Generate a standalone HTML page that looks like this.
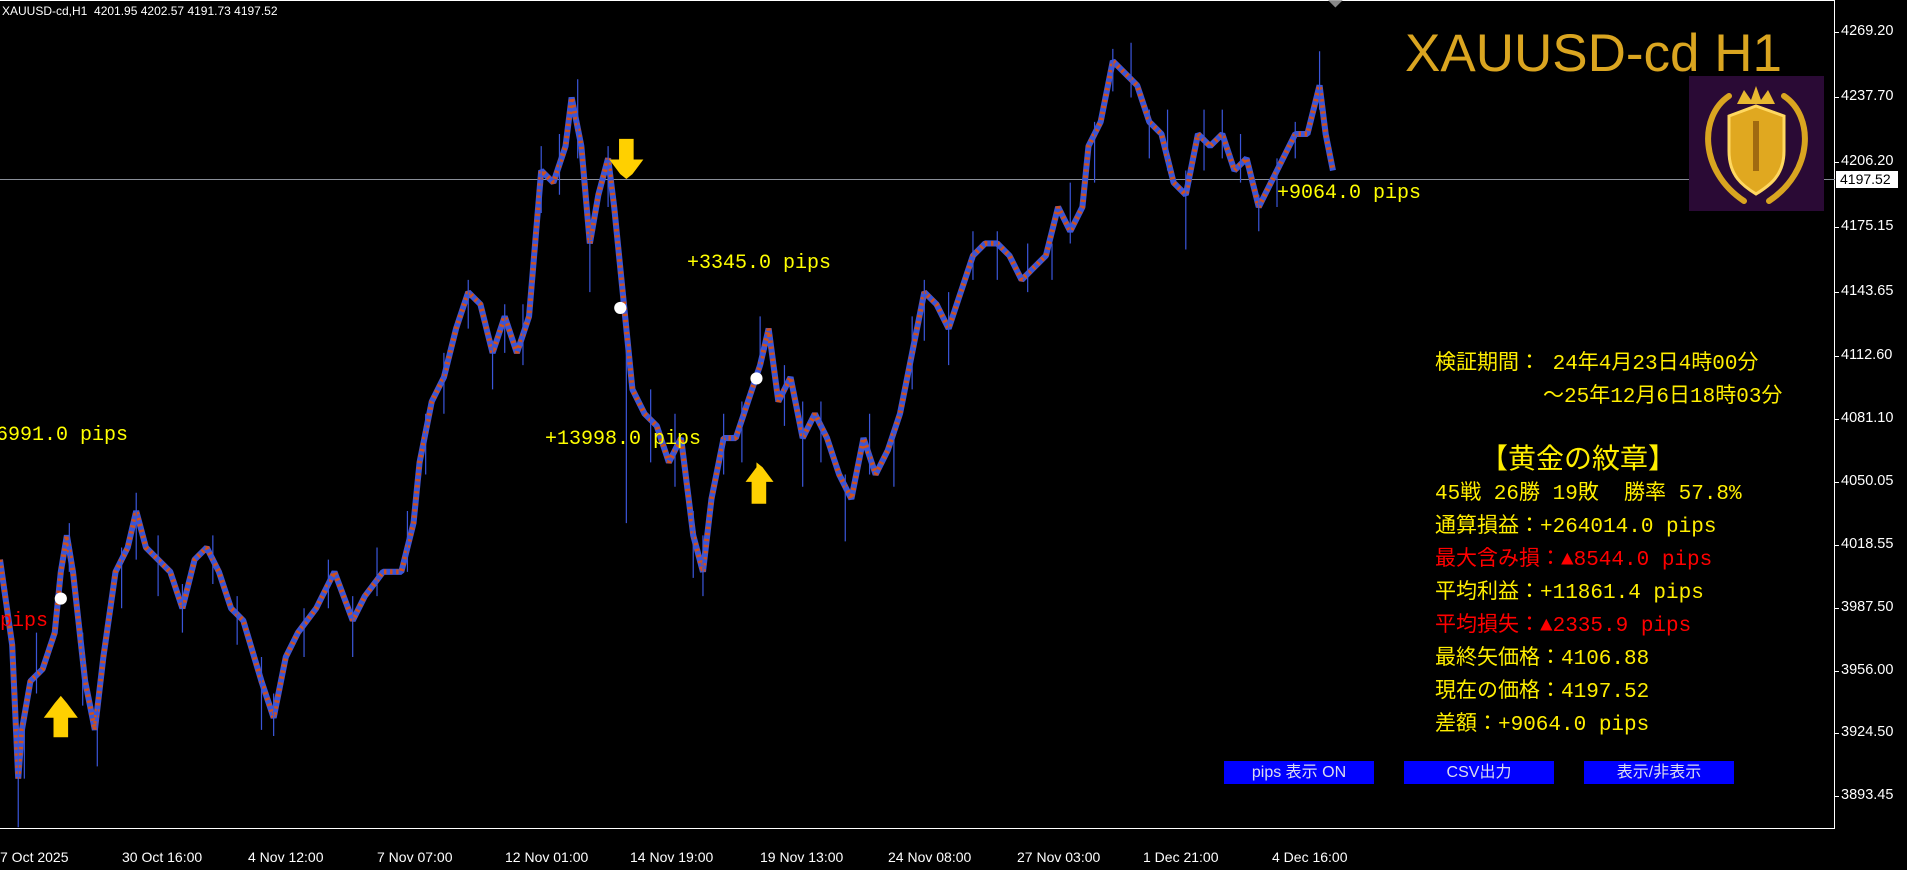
<!DOCTYPE html>
<html><head><meta charset="utf-8">
<style>
body{margin:0;width:1907px;height:870px;background:#000;overflow:hidden;position:relative;font-family:"Liberation Sans","Noto Sans CJK JP",sans-serif}
.a{position:absolute;white-space:nowrap}
.ax{position:absolute;left:1841px;color:#fff;font-size:14.5px;font-family:"Liberation Sans",sans-serif}
.ax:before{content:"";position:absolute;left:-6px;top:9px;width:4px;height:1px;background:#fff}
.dt{position:absolute;top:849px;color:#fff;font-size:14px}
.pp{position:absolute;color:#ffff00;font-size:20px;font-family:"Liberation Mono","Noto Sans CJK JP",monospace}
.inf{position:absolute;left:1435px;color:#ffee00;font-size:21px;font-family:"Liberation Mono","Noto Sans CJK JP",monospace;line-height:26px}
.r{color:#ff0000}
.btn{position:absolute;top:761px;width:150px;height:23px;background:#0000ff;color:#dde;font-size:16px;text-align:center;line-height:23px}
</style></head><body>
<div class="a" style="left:0;top:0;width:1835px;height:829px;border-right:1px solid #fff;border-bottom:1px solid #fff;border-top:1px solid #fff;box-sizing:border-box"></div>
<div class="a" style="left:0;top:179px;width:1835px;height:1px;background:#8a8f99"></div>
<svg class="a" style="left:0;top:0" width="1907" height="870" viewBox="0 0 1568 715">
<polygon points="1092,0 1104,0 1098,6" fill="#888"/>
<g fill="none" stroke-width="5" stroke-linejoin="bevel">
<polyline stroke="#3a55d8" points="0,460 10,530 15,640 18,600 25,560 35,550 45,520 50,470 55,440 60,470 70,560 78,600 85,540 95,470 105,450 112,420 120,450 130,460 140,470 150,500 160,460 170,450 180,470 190,500 200,510 215,560 225,590 235,540 245,520 260,500 275,470 290,510 300,490 315,470 330,470 340,430 345,380 355,330 365,310 375,270 385,240 395,250 405,290 415,260 425,290 435,260 445,140 455,150 465,120 470,80 478,120 485,200 492,160 500,130 505,170 512,240 520,320 530,340 540,350 550,380 560,360 570,440 578,470 585,410 595,360 605,360 615,330 625,300 632,270 640,330 650,310 660,360 670,340 680,360 690,390 700,410 710,360 720,390 730,370 740,340 750,290 760,240 770,250 780,270 790,240 800,210 810,200 820,200 830,210 840,230 850,220 860,210 870,170 880,190 890,170 895,120 905,100 915,50 925,60 935,70 945,100 955,110 965,150 975,160 985,110 995,120 1005,110 1015,140 1025,130 1035,170 1045,150 1055,130 1065,110 1075,110 1085,70 1090,110 1096,140"/>
<polyline stroke="#d0501a" stroke-dasharray="2 3" stroke-width="4" points="0,460 10,530 15,640 18,600 25,560 35,550 45,520 50,470 55,440 60,470 70,560 78,600 85,540 95,470 105,450 112,420 120,450 130,460 140,470 150,500 160,460 170,450 180,470 190,500 200,510 215,560 225,590 235,540 245,520 260,500 275,470 290,510 300,490 315,470 330,470 340,430 345,380 355,330 365,310 375,270 385,240 395,250 405,290 415,260 425,290 435,260 445,140 455,150 465,120 470,80 478,120 485,200 492,160 500,130 505,170 512,240 520,320 530,340 540,350 550,380 560,360 570,440 578,470 585,410 595,360 605,360 615,330 625,300 632,270 640,330 650,310 660,360 670,340 680,360 690,390 700,410 710,360 720,390 730,370 740,340 750,290 760,240 770,250 780,270 790,240 800,210 810,200 820,200 830,210 840,230 850,220 860,210 870,170 880,190 890,170 895,120 905,100 915,50 925,60 935,70 945,100 955,110 965,150 975,160 985,110 995,120 1005,110 1015,140 1025,130 1035,170 1045,150 1055,130 1065,110 1075,110 1085,70 1090,110 1096,140"/>
</g>
<g stroke="#3a55d8" stroke-width="1">
<path d="M15,600V680M20,590V640M30,520V570M57,430V470M68,520V580M80,580V630M100,450V500M112,405V460M130,440V490M150,480V520M175,440V480M195,490V530M215,540V600M225,570V605M250,500V540M270,460V500M290,490V540M310,450V490M335,420V470M350,340V390M365,290V340M385,230V270M405,280V320M415,250V290M430,250V300M445,120V175M460,110V160M475,65V130M485,190V240M500,120V170M515,280V430M535,320V380M555,340V400M570,420V475M578,440V490M595,340V390M610,330V380M625,260V300M645,300V350M660,330V400M675,330V380M695,390V445M715,340V390M735,350V400M750,260V320M760,230V280M780,240V300M800,190V230M820,190V230M845,200V240M865,200V230M880,150V200M900,100V150M915,40V75M930,35V80M945,90V130M960,90V140M975,140V205M990,90V140M1005,90V130M1020,110V150M1035,160V190M1050,130V170M1065,100V130M1085,42V90"/>
</g>
<path d="M45,578L36,590H44V606H56V590H64L55,578L50,572Z" fill="#ffd000"/>
<path d="M510,143L501,131H509V114H521V131H529L520,143L515,147Z" fill="#ffd000"/>
<path d="M622,384L613,396H618V414H630V396H636L627,384L622,380Z" fill="#ffd000"/>
<circle cx="50" cy="492" r="5" fill="#fff"/><circle cx="510" cy="253" r="5" fill="#fff"/><circle cx="622" cy="311" r="5" fill="#fff"/>
</svg>
<div class="a" style="left:2px;top:4px;color:#fff;font-size:12px">XAUUSD-cd,H1&nbsp; 4201.95 4202.57 4191.73 4197.52</div>
<div class="pp" style="left:687px;top:252px">+3345.0 pips</div>
<div class="pp" style="left:-4px;top:424px">6991.0 pips</div>
<div class="pp" style="left:545px;top:428px">+13998.0 pips</div>
<div class="pp" style="left:1277px;top:182px">+9064.0 pips</div>
<div class="pp" style="left:0;top:610px;color:#ff0000">pips</div>
<div class="a" style="left:1405px;top:24px;color:#daa520;font-size:53px;line-height:60px">XAUUSD-cd H1</div>
<div class="a" style="left:1689px;top:76px;width:135px;height:135px;background:#2a0a35">
<svg width="135" height="135" viewBox="0 0 135 135">
<g fill="none" stroke="#d9a520" stroke-width="6" stroke-linecap="round">
<path d="M40,20C10,40 10,95 55,125"/><path d="M95,20C125,40 125,95 80,125"/></g>
<path d="M48,28L55,14L62,24L67,10L72,24L79,14L86,28Z" fill="#e8b830"/>
<path d="M40,40L67,30L95,40V75C95,100 80,110 67,118C54,110 40,100 40,75Z" fill="#e0a820" stroke="#ffd860" stroke-width="3"/>
<path d="M64,45H70V95H64Z" fill="#a06a10"/>
</svg></div>
<div class="ax" style="top:23px">4269.20</div>
<div class="ax" style="top:88px">4237.70</div>
<div class="ax" style="top:153px">4206.20</div>
<div class="a" style="left:1836px;top:171px;width:62px;height:17px;background:#fff;color:#000;font-size:14px;line-height:17px;padding-left:4px;box-sizing:border-box">4197.52</div>
<div class="ax" style="top:218px">4175.15</div>
<div class="ax" style="top:283px">4143.65</div>
<div class="ax" style="top:347px">4112.60</div>
<div class="ax" style="top:410px">4081.10</div>
<div class="ax" style="top:473px">4050.05</div>
<div class="ax" style="top:536px">4018.55</div>
<div class="ax" style="top:599px">3987.50</div>
<div class="ax" style="top:662px">3956.00</div>
<div class="ax" style="top:724px">3924.50</div>
<div class="ax" style="top:787px">3893.45</div>
<div class="dt" style="left:0">7 Oct 2025</div>
<div class="dt" style="left:122px">30 Oct 16:00</div>
<div class="dt" style="left:248px">4 Nov 12:00</div>
<div class="dt" style="left:377px">7 Nov 07:00</div>
<div class="dt" style="left:505px">12 Nov 01:00</div>
<div class="dt" style="left:630px">14 Nov 19:00</div>
<div class="dt" style="left:760px">19 Nov 13:00</div>
<div class="dt" style="left:888px">24 Nov 08:00</div>
<div class="dt" style="left:1017px">27 Nov 03:00</div>
<div class="dt" style="left:1143px">1 Dec 21:00</div>
<div class="dt" style="left:1272px">4 Dec 16:00</div>
<div class="inf" style="top:352px">検証期間：&nbsp;24年4月23日4時00分</div>
<div class="inf" style="top:385px;left:1543px">～25年12月6日18時03分</div>
<div class="inf" style="top:441px;left:1480px;font-size:28px;line-height:32px;font-family:'Noto Sans CJK JP',sans-serif">【黄金の紋章】</div>
<div class="inf" style="top:482px">45戦 26勝 19敗&nbsp; 勝率 57.8%</div>
<div class="inf" style="top:515px">通算損益：+264014.0 pips</div>
<div class="inf r" style="top:548px">最大含み損：▲8544.0 pips</div>
<div class="inf" style="top:581px">平均利益：+11861.4 pips</div>
<div class="inf r" style="top:614px">平均損失：▲2335.9 pips</div>
<div class="inf" style="top:647px">最終矢価格：4106.88</div>
<div class="inf" style="top:680px">現在の価格：4197.52</div>
<div class="inf" style="top:713px">差額：+9064.0 pips</div>
<div class="btn" style="left:1224px">pips 表示 ON</div>
<div class="btn" style="left:1404px">CSV出力</div>
<div class="btn" style="left:1584px">表示/非表示</div>
</body></html>
